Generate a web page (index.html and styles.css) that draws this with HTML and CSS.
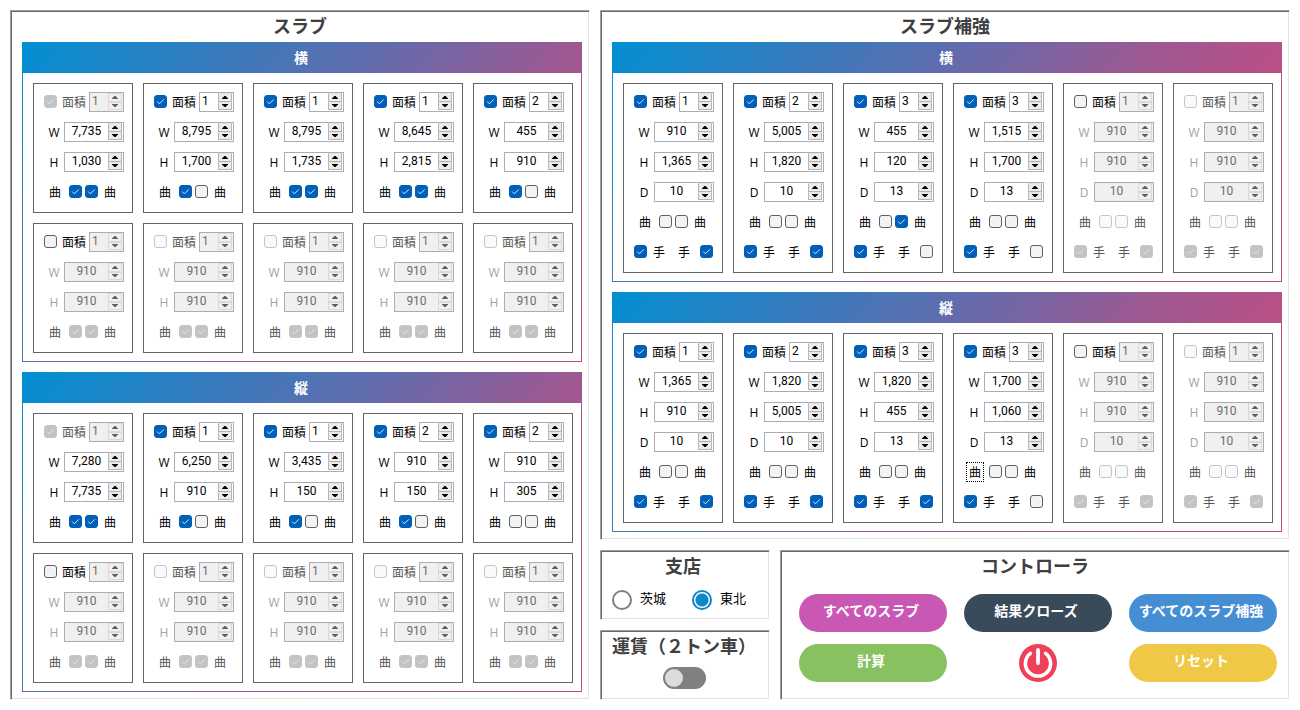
FILE: index.html
```html
<!DOCTYPE html>
<html lang="ja">
<head>
<meta charset="utf-8">
<title>スラブ</title>
<link rel="stylesheet" href="styles.css">
</head>
<body>
<main class="page">
  <section class="panel">
    <h1 class="title">スラブ</h1>
    <div class="groups">
      <section class="group"><h2 class="group-head">横</h2><div class="cards five" data-set="slabH"></div></section>
      <section class="group"><h2 class="group-head">縦</h2><div class="cards five" data-set="slabV"></div></section>
    </div>
  </section>
  <div class="column">
    <section class="panel">
      <h1 class="title">スラブ補強</h1>
      <div class="groups">
        <section class="group wide"><h2 class="group-head">横</h2><div class="cards six" data-set="reinfH"></div></section>
        <section class="group wide"><h2 class="group-head">縦</h2><div class="cards six" data-set="reinfV"></div></section>
      </div>
    </section>
    <div class="bottom">
      <div class="options">
        <section class="panel">
          <h1 class="title">支店</h1>
          <div class="radios">
            <label class="radio"><input type="radio" name="branch"><span>茨城</span></label>
            <label class="radio"><input type="radio" name="branch" checked><span>東北</span></label>
          </div>
        </section>
        <section class="panel">
          <h1 class="title">運賃（２トン車）</h1>
          <div class="switch-row"><input type="checkbox" class="switch" aria-label="運賃（２トン車）"></div>
        </section>
      </div>
      <section class="panel controller">
        <h1 class="title">コントローラ</h1>
        <div class="actions">
          <button class="pill magenta">すべてのスラブ</button>
          <button class="pill navy">結果クローズ</button>
          <button class="pill blue">すべてのスラブ補強</button>
          <button class="pill green">計算</button>
          <button class="power" aria-label="終了">
            <svg width="38" height="38" viewBox="0 0 38 38" fill="none">
              <circle cx="19" cy="19" r="19" fill="#ee4056"/>
              <path d="M11.4 9.4A12.6 12.6 0 1 0 26.6 9.4" stroke="#fff" stroke-width="3.6" stroke-linecap="round"/>
              <path d="M19 6V19" stroke="#fff" stroke-width="3.8" stroke-linecap="round"/>
            </svg>
          </button>
          <button class="pill yellow">リセット</button>
        </div>
      </section>
    </div>
  </div>
</main>
<script src="app.js"></script>
</body>
</html>
```

FILE: styles.css
```css
* { box-sizing: border-box; }

body {
  margin: 0;
  background: #fff;
  color: #000;
  font-family: "Noto Sans CJK JP", sans-serif;
  font-size: 12px;
}

h1, h2 { margin: 0; }
input, button { font: inherit; color: inherit; margin: 0; }

.page {
  display: grid;
  grid-template-columns: 580fr 690fr;
  gap: 10px;
  padding: 10px;
}

.column { display: flex; flex-direction: column; gap: 10px; min-width: 0; }

.panel {
  border: 1px solid;
  border-color: #a0a0a0 #fff #fff #a0a0a0;
  box-shadow: inset 1px 1px 0 #696969, inset -1px -1px 0 #e3e3e3;
  padding: 1px 7px 7px 11px;
}

.title {
  color: #404040;
  font-size: 18px;
  font-weight: 700;
  line-height: 26px;
  padding: 0 4px 4px 0;
  text-align: center;
  white-space: nowrap;
}

.groups { display: flex; flex-direction: column; gap: 10px; }

.group {
  background: linear-gradient(135deg, #0090d3, #606cad 41%, #9f5891 64%, #c54d80) border-box;
  border: 1px solid transparent;
}

.group.wide {
  background: linear-gradient(135deg, #0090d3, #606cad 39%, #9f5891 61%, #b85086 75%, #c54d80) border-box;
}

.group-head {
  color: #fff;
  font-size: 14px;
  font-weight: 700;
  line-height: 28px;
  padding: 0 2px 2px 0;
  text-align: center;
}

.cards {
  display: grid;
  gap: 10px;
  padding: 10px 8px 8px 10px;
  background: #fff;
}

.five { grid-template-columns: repeat(5, 1fr); }
.six { grid-template-columns: repeat(6, 1fr); }

.card {
  display: flex;
  flex-direction: column;
  gap: 10px;
  min-width: 0;
  padding: 8px 8px 10px 10px;
  border: 1px solid #646464;
}

.row {
  display: flex;
  align-items: center;
  justify-content: space-between;
  height: 20px;
  line-height: 19px;
}

.tick { display: flex; align-items: center; gap: 5px; height: 20px; padding-bottom: 1px; }
.joint .tick { gap: 6px; }
.joint .tick + .tick { gap: 10px; padding-right: 1px; }

.check {
  appearance: none;
  width: 13px;
  height: 13px;
  border: 1px solid #606060;
  border-radius: 3px;
  background: #f3f3f3;
}

.check:checked {
  border-color: #005fb8;
  background: #005fb8 url("data:image/svg+xml,%3Csvg xmlns='http://www.w3.org/2000/svg' viewBox='0 0 11 11'%3E%3Cpath d='M2.2 5.6 4.4 7.8 8.8 3.4' fill='none' stroke='%23d8eaff'/%3E%3C/svg%3E") center / 11px 11px no-repeat;
}

.check:disabled { border-color: #c5c5c5; background-color: #fafafa; }
.check:checked:disabled { background-color: #c3c3c3; }

.muted { color: #555; }

.size { display: flex; flex: 1; align-items: center; justify-content: space-between; padding-left: 3px; }
.size-name { flex: 1; text-align: center; padding-right: 3px; font-family: "Open Sans", sans-serif; }
.size.off { color: #a3a3a3; }

.spin {
  display: flex;
  width: 60px;
  height: 20px;
  border: 1px solid #abadb3;
  background: #fff;
  font-family: Roboto, sans-serif;
}

.spin.small { width: 35px; }
.spin.off { background: #f0f0f0; color: #6d6d6d; }

.spin-value {
  flex: 1;
  width: 0;
  min-width: 0;
  height: 16px;
  padding: 0;
  border: 0;
  background: none;
  text-align: center;
}

.small .spin-value { padding-left: 2px; text-align: left; }

.spin-buttons { display: flex; flex-direction: column; width: 15px; padding: 0 1px 1px 0; }

.spin-button {
  display: flex;
  flex: 1;
  align-items: center;
  justify-content: center;
  padding: 0;
  border: 1px solid #b4b4b4;
  border-top-color: #e4e4e4;
  background: #ececec;
}

.off .spin-button { border-color: #d9d9d9; background: #f0f0f0; color: #606060; }

.curve { padding: 0 8px 1px 5px; }
.pair { display: flex; gap: 3px; padding-left: 2px; }
.curve-name { line-height: 14px; }
.focused { outline: 1px dotted #000; outline-offset: 2px; }

.bottom { display: grid; grid-template-columns: 170fr 510fr; gap: 10px; }
.options { display: flex; flex-direction: column; gap: 10px; min-width: 0; }
.options .panel { height: 70px; padding-right: 11px; }

.radios { display: grid; grid-template-columns: 1fr 1fr; column-gap: 14px; padding-top: 8px; }
.radio { display: flex; align-items: center; gap: 8px; font-size: 13px; line-height: 16px; white-space: nowrap; }
.radio span { padding-bottom: 4px; }

.radio input {
  appearance: none;
  flex: none;
  width: 20px;
  height: 20px;
  border: 2px solid #808080;
  border-radius: 50%;
}

.radio input:checked {
  border-color: #0e86cc;
  background: radial-gradient(circle, #0e86cc 6px, #fff 7px);
}

.switch-row { display: flex; justify-content: center; padding: 5px 2px 0 0; }

.switch {
  appearance: none;
  display: flex;
  align-items: center;
  width: 43px;
  height: 22px;
  padding-left: 2px;
  border-radius: 11px;
  background: #808080;
}

.switch::before {
  content: "";
  width: 18px;
  height: 18px;
  border-radius: 50%;
  background: #dcdcdc;
}

.controller { min-width: 0; padding-left: 11px; }

.actions {
  display: grid;
  grid-template-columns: repeat(3, 1fr);
  gap: 12px 17px;
  padding: 12px 5px 0 7px;
}

.pill {
  height: 38px;
  padding: 0 4px 6px 0;
  border: 0;
  border-radius: 19px;
  color: #fff;
  font-size: 14px;
  font-weight: 700;
  white-space: nowrap;
}

.magenta { background: #c957b4; }
.navy { background: #394a5a; }
.blue { background: #468ed3; }
.green { background: #87c160; }
.yellow { background: #efc945; }

.power { display: flex; justify-content: center; height: 38px; padding: 0; border: 0; background: none; }
```

FILE: app.js
```js
// Card fields: area value, area tick state, sizes, curve ticks, joint ticks.
// Area state: "on" ticked, "locked" ticked but disabled, "next" free to tick, "off" disabled.
const next = (sizes, curve, joint) => ({ area: 1, state: "next", sizes: Array(sizes).fill(910), curve, joint });
const off = (sizes, curve, joint) => ({ ...next(sizes, curve, joint), state: "off" });
const card = (area, sizes, curve, joint, extra) => ({ area, state: "on", sizes, curve, joint, ...extra });

const emptySlabs = [next(2, [1, 1]), off(2, [1, 1]), off(2, [1, 1]), off(2, [1, 1]), off(2, [1, 1])];
const emptyReinf = ["next", "off"].map(state => ({ area: 1, state, sizes: [910, 910, 10], curve: [0, 0], joint: [1, 1] }));

const sets = {
  slabH: [
    card(1, [7735, 1030], [1, 1], null, { state: "locked" }),
    card(1, [8795, 1700], [1, 0]),
    card(1, [8795, 1735], [1, 1]),
    card(1, [8645, 2815], [1, 1]),
    card(2, [455, 910], [1, 0]),
    ...emptySlabs
  ],
  slabV: [
    card(1, [7280, 7735], [1, 1], null, { state: "locked" }),
    card(1, [6250, 910], [1, 0]),
    card(1, [3435, 150], [1, 0]),
    card(2, [910, 150], [1, 0]),
    card(2, [910, 305], [0, 0]),
    ...emptySlabs
  ],
  reinfH: [
    card(1, [910, 1365, 10], [0, 0], [1, 1]),
    card(2, [5005, 1820, 10], [0, 0], [1, 1]),
    card(3, [455, 120, 13], [0, 1], [1, 0]),
    card(3, [1515, 1700, 13], [0, 0], [1, 0]),
    ...emptyReinf
  ],
  reinfV: [
    card(1, [1365, 910, 10], [0, 0], [1, 1]),
    card(2, [1820, 5005, 10], [0, 0], [1, 1]),
    card(3, [1820, 455, 13], [0, 0], [1, 1]),
    card(3, [1700, 1060, 13], [0, 0], [1, 0], { focused: true }),
    ...emptyReinf
  ]
};

const arrow = d => `<svg width="6" height="3" viewBox="0 0 6 3"><path d="${d}" fill="currentColor"/></svg>`;

const check = (on, disabled, label = "") =>
  `<input type="checkbox" class="check"${label && ` aria-label="${label}"`}${on ? " checked" : ""}${disabled ? " disabled" : ""}>`;

const spin = (value, disabled, small, label = "") => {
  const d = disabled ? " disabled" : "";
  return `<span class="spin${small ? " small" : ""}${disabled ? " off" : ""}">
    <input type="text" class="spin-value" value="${value.toLocaleString("en-US")}"${label && ` aria-label="${label}"`}${d}>
    <span class="spin-buttons">
      <button class="spin-button" aria-label="増やす"${d}>${arrow("M0 3V2.4L2.4 0H3.6L6 2.4V3Z")}</button>
      <button class="spin-button" aria-label="減らす"${d}>${arrow("M0 0V.6L2.4 3H3.6L6 .6V0Z")}</button>
    </span></span>`;
};

function render(c) {
  const disabled = c.state === "off" || c.state === "next";
  const tickDisabled = c.state === "off" || c.state === "locked";
  const tone = disabled ? " muted" : "";
  const sizes = c.sizes.map((v, i) =>
    `<div class="row"><label class="size${disabled ? " off" : ""}"><span class="size-name">${"WHD"[i]}</span>${spin(v, disabled, false)}</label></div>`).join("");
  const joint = c.joint ? `<div class="row joint${tone}">
      <label class="tick">${check(c.joint[0], disabled)}<span>手</span></label>
      <label class="tick"><span>手</span>${check(c.joint[1], disabled)}</label></div>` : "";
  return `<div class="card">
    <div class="row">
      <label class="tick${tickDisabled ? " muted" : ""}">${check(c.state === "on" || c.state === "locked", tickDisabled)}<span>面積</span></label>
      ${spin(c.area, disabled || c.state === "locked", true, "面積")}
    </div>
    ${sizes}
    <div class="row curve${tone}">
      <span class="curve-name${c.focused ? " focused" : ""}">曲</span>
      <span class="pair">${check(c.curve[0], disabled, "曲 左")}${check(c.curve[1], disabled, "曲 右")}</span>
      <span class="curve-name">曲</span>
    </div>
    ${joint}
  </div>`;
}

document.querySelectorAll("[data-set]").forEach(el => {
  el.innerHTML = sets[el.dataset.set].map(render).join("");
});
```
